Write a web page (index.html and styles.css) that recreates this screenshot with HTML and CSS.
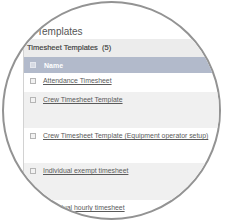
FILE: index.html
```html
<!DOCTYPE html>
<html>
<head>
<meta charset="utf-8">
<link rel="stylesheet" href="styles.css">
</head>
<body>
<div class="lens">
  <div class="page">
    <div class="heading">Templates</div>
    <div class="panel">
      <div class="title">Timesheet Templates&nbsp; (5)</div>
      <div class="thead"><span class="cb head-cb"></span><span class="name">Name</span></div>
      <div class="row r1"><span class="cb"></span><a class="link">Attendance Timesheet</a></div>
      <div class="row alt r2"><span class="cb"></span><a class="link">Crew Timesheet Template</a></div>
      <div class="row r3"><span class="cb"></span><a class="link">Crew Timesheet Template (Equipment operator setup)</a></div>
      <div class="row alt r4"><span class="cb"></span><a class="link">Individual exempt timesheet</a></div>
      <div class="row r5"><span class="cb"></span><a class="link">Individual hourly timesheet</a></div>
    </div>
  </div>
</div>
</body>
</html>
```
FILE: styles.css
```css
html, body { margin: 0; padding: 0; background: #fff; }
body { font-family: "Liberation Sans", Arial, sans-serif; }
.lens {
  width: 215px;
  height: 215px;
  margin: 1px 0 0 2px;
  border: 2px solid #939393;
  border-radius: 50%;
  overflow: hidden;
  background: #fff;
}
.page { padding: 22px 0 0 19px; }
.heading {
  margin-left: 14px;
  height: 14px;
  line-height: 14px;
  font-size: 10px;
  color: #555;
}
.panel {
  width: 260px;
  border-left: 1px solid #d2d2d2;
}
.title {
  height: 18px;
  line-height: 18px;
  background: #ececec;
  padding-left: 3px;
  font-size: 7.5px;
  color: #3c3c3c;
  -webkit-text-stroke: 0.15px #3c3c3c;
}
.thead {
  height: 16px;
  background: #b2bacb;
  display: flex;
  align-items: center;
}
.cb {
  width: 4px;
  height: 4px;
  border: 1px solid #b5b5b5;
  background: #f2f2f2;
  margin-left: 6px;
  flex: none;
}
.head-cb { border-color: #e4e7ee; background: #d6dae3; }
.name {
  margin-left: 8px;
  font-size: 7px;
  font-weight: bold;
  color: #fff;
}
.row {
  display: flex;
  align-items: flex-start;
  padding-top: 4px;
  box-sizing: border-box;
}
.row .cb { margin-top: 1px; }
.alt { background: #f0f0f0; }
.r1 { height: 19px; }
.r2 { height: 36px; }
.r3 { height: 35px; }
.r4 { height: 37px; }
.r5 { height: 30px; }
.link {
  margin-left: 7px;
  font-size: 6.9px;
  line-height: 8px;
  color: #5a5a5a;
  text-decoration: underline;
  white-space: nowrap;
}
```
